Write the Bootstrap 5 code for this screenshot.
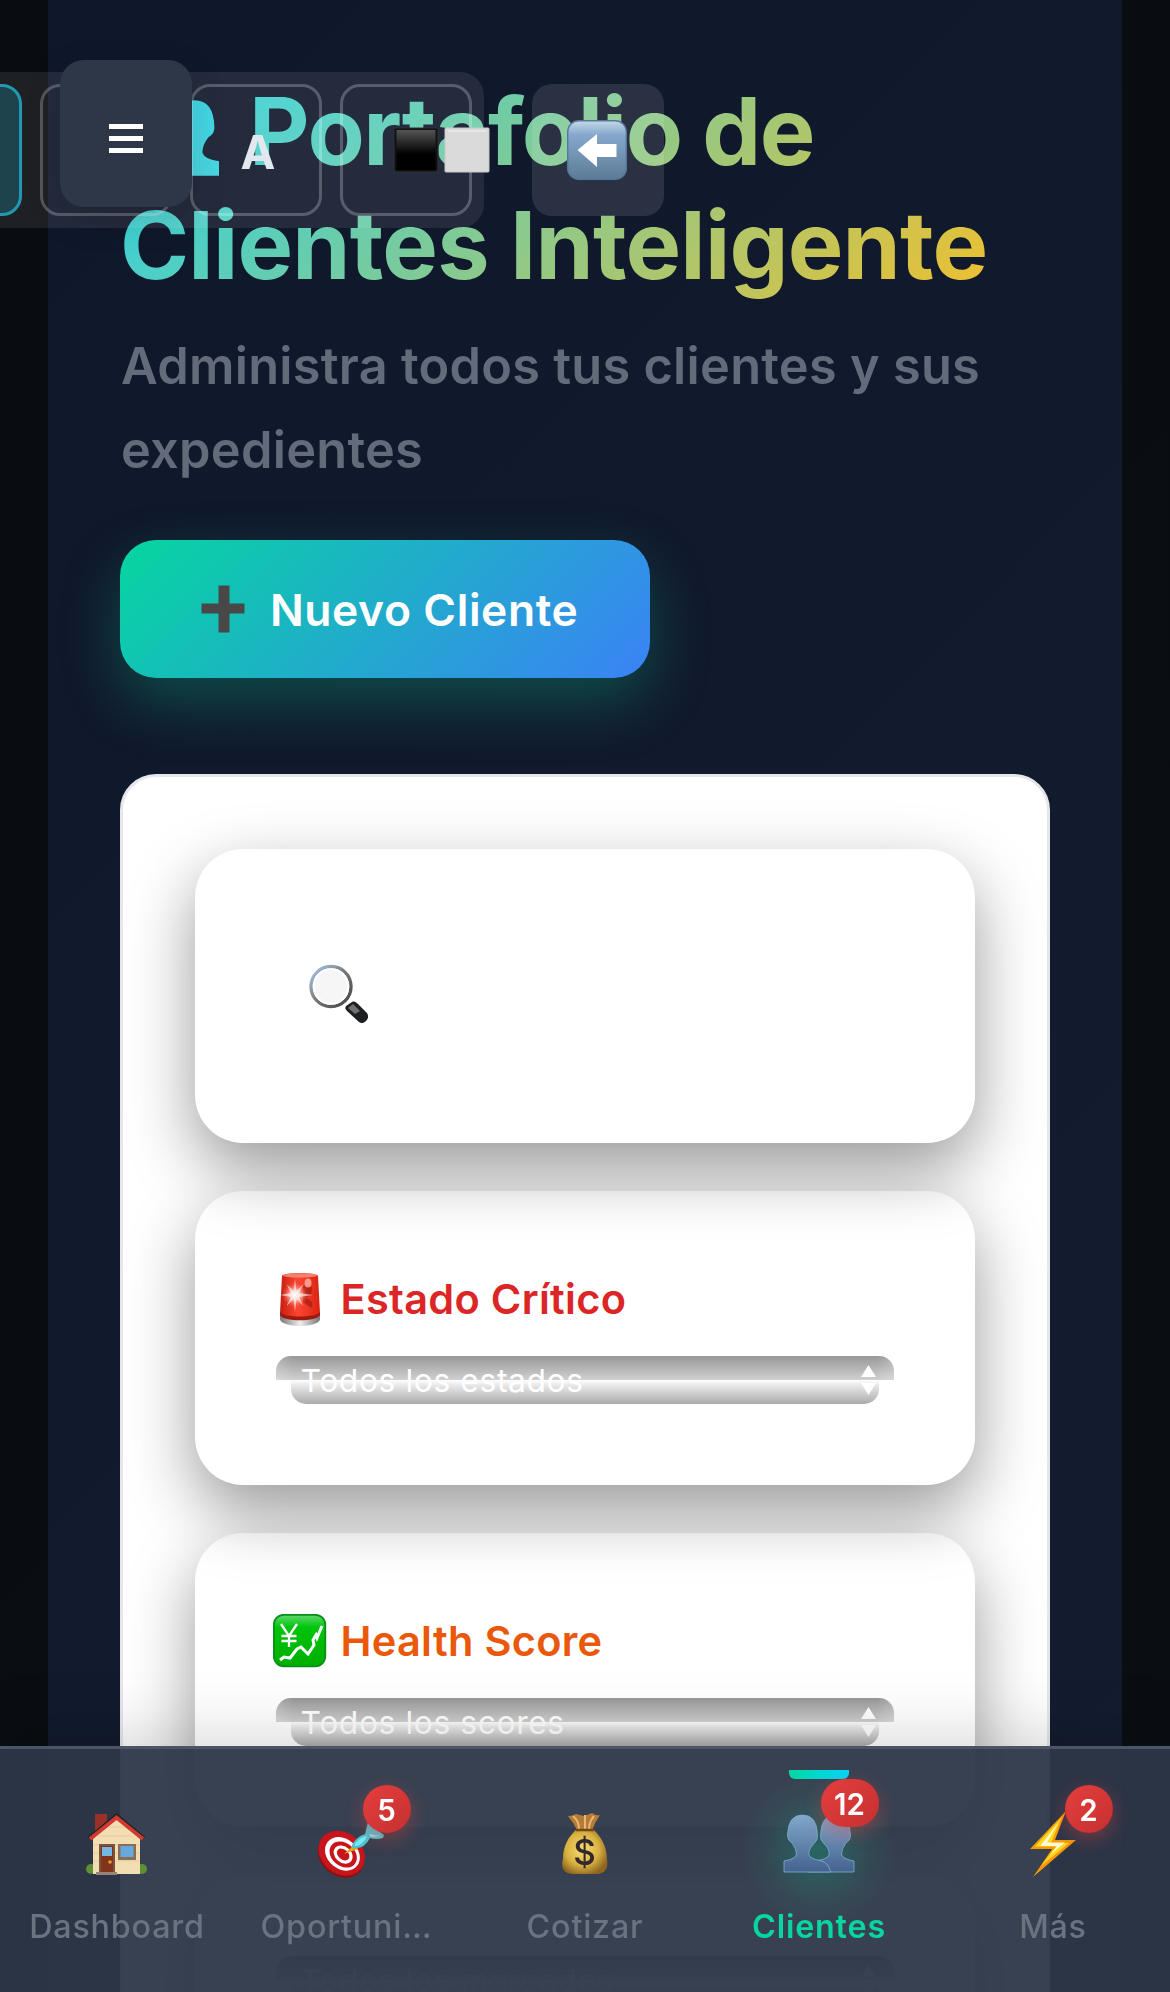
<!DOCTYPE html>
<html lang="es">
<head>
<meta charset="utf-8">
<meta name="viewport" content="width=device-width, initial-scale=1">
<title>Portafolio de Clientes</title>
<link href="https://cdn.jsdelivr.net/npm/bootstrap@5.3.0/dist/css/bootstrap.min.css" rel="stylesheet">
<style>
body{font-family:Inter,"Liberation Sans",sans-serif;background:linear-gradient(135deg,#090c10,#0a0e12);}
.page-shell{height:1992px;margin:0 48px;padding:74px 72px 0;background:linear-gradient(135deg,#0f172a,#141c30);}
.hero-title{font-size:93.5px;line-height:114px;font-weight:700;letter-spacing:-.8px;margin-bottom:22px;background:linear-gradient(135deg,#22d3ee,#fbbf24);-webkit-background-clip:text;background-clip:text;color:transparent;white-space:nowrap}
.hero-title svg{width:93px;height:76px;margin:0 30px 0 6px;vertical-align:-11px}
.hero-line{letter-spacing:-1.4px}
.hero-sub{font-size:50.5px;line-height:84px;font-weight:600;letter-spacing:.25px;color:#636a79;margin:0 -1px 48px 1px}
.btn-new{width:530px;height:138px;border-radius:36px;background:linear-gradient(135deg,#06d6a0,#3b82f6);box-shadow:0 24px 60px rgba(6,214,160,.27);color:#fff;font-size:44.4px;font-weight:600;letter-spacing:.6px;padding:9px 0 6px 78px;margin-bottom:96px}
.btn-new svg{width:51px;height:51px;margin-right:21px}
.panel{border:3px solid #e5e7eb;border-radius:36px;padding:72px;background:#fff;gap:48px;height:1500px}
.filter-box{border-radius:48px;padding:81px;background:rgba(255,255,255,.05);box-shadow:0 26px 66px rgba(0,0,0,.4);flex:none}
.search-box{height:294px;padding-left:112px}
.filter-label{font-size:41.5px;line-height:54px;font-weight:600;letter-spacing:.3px;margin:0 0 30px -3px;gap:13.5px}
.filter-label svg{width:54px;height:54px}
.pick{height:48px;padding:0 18px 0 24.5px;color:#fff;font-size:31.8px;line-height:48px;letter-spacing:.6px;isolation:isolate}
.pick span{padding-top:2px}
.pick::before,.pick::after{content:"";position:absolute;z-index:-1;height:24px}
.pick::before{left:0;right:0;top:0;border-radius:15px 15px 0 0;background:linear-gradient(90deg,rgba(255,255,255,.2),transparent 18px calc(100% - 18px),rgba(255,255,255,.2)),linear-gradient(#989898,#d0d0d0)}
.pick::after{left:15px;right:15px;top:24px;border-radius:0 0 15px 15px;background:linear-gradient(#fff,#eaeaea 20%,#ababab)}
.pick svg{width:15px;height:30px}
.theme-bar{position:fixed;left:-122px;top:72px;padding:12px;gap:18px;border-radius:24px;background:rgba(255,255,255,.085);z-index:5}
.tool-key{width:132px;height:132px;border:3px solid rgba(255,255,255,.24);border-radius:20px;color:#e2e8f0;font-size:46.7px;font-weight:700}
.tool-key.on{background:rgba(34,211,238,.2);border-color:#2299b2}
.back-key{position:fixed;left:532px;top:84px;width:132px;height:132px;border-radius:20px;background:rgba(255,255,255,.11);z-index:5}
.back-key svg{width:60px;height:60px;margin-right:3px}
.menu-key{position:fixed;left:60px;top:60px;width:132px;height:147px;border-radius:24px;background:#2d3748;box-shadow:0 12px 36px rgba(0,0,0,.15);z-index:6}
.menu-key svg{margin-top:11px}
.tabs{height:246px;border-top:3px solid #4a5568;background:rgba(45,55,72,.95);box-shadow:0 -12px 60px rgba(0,0,0,.15);z-index:7}
.tab{flex:1 1 0;min-width:0;padding-top:63px;color:#6b7280;font-size:32.3px;line-height:40px;font-weight:500;letter-spacing:.8px;text-decoration:none}
.tab svg{height:64px;width:80px;margin-bottom:31px;overflow:visible}
.tab.active-tab{color:#06d6a0;font-weight:600}
.active-tab::before{content:"";position:absolute;top:21px;left:87px;width:60px;height:9px;border-radius:0 0 6px 6px;background:linear-gradient(90deg,#06d6a0,#00d9ff)}
.glow{position:absolute;left:37px;top:20px;width:160px;height:160px;background:radial-gradient(circle,rgba(6,214,160,.26),rgba(6,214,160,.07) 45%,transparent 68%)}
.tab-count{position:absolute;left:129px;top:36px;min-width:48px;height:48px;border-radius:24px;background:linear-gradient(135deg,#e53e3e,#c53030);box-shadow:0 6px 18px rgba(229,62,62,.4);color:#fff;font-size:29.5px;line-height:51px;font-weight:600;letter-spacing:0;text-align:center;padding-right:1px}
</style>
</head>
<body class="overflow-hidden">
<svg width="0" height="0" class="position-absolute">
<defs>
<path id="bust" d="M0 57V46Q12 44 12.500 39Q12.500 34 8 28Q3 25 3.500 20Q4 0 18.500 0Q33 0 33.500 20Q34.500 25 29.500 29Q24 35 25 40Q27 44 36 45.500Q45.500 48 46.500 57Z"/>
<linearGradient id="gTitle" gradientUnits="userSpaceOnUse" x1="0" y1="0" x2="70" y2="57"><stop stop-color="#2ed2e4"/><stop offset="1" stop-color="#46d2d6"/></linearGradient>
<linearGradient id="gBlue" x1="0" y1="0" x2="0" y2="1"><stop stop-color="#82a8ca"/><stop offset="1" stop-color="#44638f"/></linearGradient>
<linearGradient id="gBlack" x1="0" y1="0" x2="0" y2="1"><stop stop-color="#555"/><stop offset=".6" stop-color="#000"/></linearGradient>
<linearGradient id="gKey" x1="0" y1="0" x2="0" y2="1"><stop stop-color="#c5d8e8"/><stop offset=".25" stop-color="#84a7cb"/><stop offset="1" stop-color="#5c7b96"/></linearGradient>
<linearGradient id="gRed" x1="0" x2="1"><stop stop-color="#c81e12"/><stop offset=".45" stop-color="#fa4632"/><stop offset="1" stop-color="#d92412"/></linearGradient>
<linearGradient id="gBase" x1="0" x2="1"><stop stop-color="#777"/><stop offset=".5" stop-color="#eee"/><stop offset="1" stop-color="#777"/></linearGradient>
<linearGradient id="gGreen" x1="0" y1="0" x2="0" y2="1"><stop stop-color="#5ed86c"/><stop offset=".25" stop-color="#00c40c"/><stop offset="1" stop-color="#00ae00"/></linearGradient>
<linearGradient id="gRim" x1="0" y1="0" x2="1" y2="1"><stop stop-color="#a9c9ee"/><stop offset=".5" stop-color="#777"/><stop offset="1" stop-color="#3e4144"/></linearGradient>
<radialGradient id="gBag" cx=".45" cy=".45" r=".6"><stop stop-color="#f6dd76"/><stop offset=".6" stop-color="#d9b240"/><stop offset="1" stop-color="#8d6420"/></radialGradient>
<radialGradient id="gStar"><stop stop-color="#fff"/><stop offset=".4" stop-color="#ffd0c8" stop-opacity=".8"/><stop offset="1" stop-color="#ff5540" stop-opacity="0"/></radialGradient>
</defs>
</svg>

<main class="page-shell overflow-hidden">
  <h1 class="hero-title"><svg viewBox="0 0 70 57" fill="url(#gTitle)"><use href="#bust"/><use href="#bust" transform="translate(70) scale(-1 1)"/></svg><span class="hero-line">Portafolio de</span><br>Clientes Inteligente</h1>
  <p class="hero-sub">Administra todos tus clientes y sus expedientes</p>
  <button class="btn btn-new border-0 d-flex align-items-center"><svg viewBox="0 0 51 51"><path d="M20 3.500h11v18h15v10H31v19H20v-19H3v-10h17z" fill="#484848" transform="translate(.5 -3)"/></svg>Nuevo Cliente</button>

  <section class="panel d-flex flex-column">
    <div class="filter-box search-box d-flex align-items-center">
      <svg width="64" height="64" viewBox="0 0 64 64"><path d="M39 42l6-4c2-1 4 0 6 2l9 9c2 3 1 6-1 8s-5 3-7 1L40 47c-2-2-2-3-1-5z" fill="#1d1f21"/><path d="M41 44l5-4 7 7-5 3z" fill="#8a8c8e" opacity=".75"/><circle cx="24" cy="22.500" r="20" fill="#f6f6f6" stroke="url(#gRim)" stroke-width="3.400"/><circle cx="24" cy="22.500" r="17.300" fill="none" stroke="#fff" stroke-width="2"/></svg>
    </div>

    <div class="filter-box">
      <div class="filter-label d-flex align-items-center" style="color:#dc2626">
        <svg viewBox="0 0 54 54"><path d="M7 42h40v5c0 4-9 7-20 7S7 51 7 47z" fill="url(#gBase)"/><path d="M9 4c0-4 36-4 36 0l2 37c0 8-40 8-40 0z" fill="url(#gRed)"/><path d="M7 40c3 6 37 6 40 0v3c-2 7-38 7-40 0z" fill="#9d1a10"/><ellipse cx="27" cy="3.500" rx="17" ry="2.200" fill="#f4806f"/><path d="M30 14q12-4 8 8l-5 4q8 2 6 10l-9-6z" fill="#a51a12" opacity=".7"/><ellipse cx="35" cy="11" rx="3.500" ry="4.500" fill="#ffb3a6" opacity=".8"/><circle cx="22" cy="23" r="13" fill="url(#gStar)"/><path d="M22 7l1.500 12 7-7-4.500 9 14 2-14 2 4.500 9-7-7-1.500 13-1.500-13-7 7 4.500-9-11-2 11-2-4.500-9 7 7z" fill="#fff" opacity=".6"/></svg>
        <span>Estado Crítico</span>
      </div>
      <div class="pick position-relative d-flex align-items-center justify-content-between"><span>Todos los estados</span><svg viewBox="0 0 15 30" fill="#fff"><path d="M7.500 0L15 12H0zM7.500 30L15 18H0z"/></svg></div>
    </div>

    <div class="filter-box">
      <div class="filter-label d-flex align-items-center" style="color:#ea580c">
        <svg viewBox="0 0 54 54"><rect x=".8" y=".8" width="51.500" height="51.500" rx="10" fill="url(#gGreen)" stroke="#079018" stroke-width="1.800"/><path d="M8 10l8 12 8-12M16 22v11M8.500 22h15M8.500 27h15" fill="none" stroke="#fff" stroke-width="2.300"/><path d="M7 46l4-3 6 1 7-9 4-2 7 7 6-9-1-5 3-5 1 3 5-12" fill="none" stroke="#fff" stroke-width="3"/></svg>
        <span>Health Score</span>
      </div>
      <div class="pick position-relative d-flex align-items-center justify-content-between"><span>Todos los scores</span><svg viewBox="0 0 15 30" fill="#fff"><path d="M7.500 0L15 12H0zM7.500 30L15 18H0z"/></svg></div>
    </div>

    <div class="filter-box">
      <div class="pick position-relative d-flex align-items-center justify-content-between"><span>Todos los mercados</span><svg viewBox="0 0 15 30" fill="#fff"><path d="M7.500 0L15 12H0zM7.500 30L15 18H0z"/></svg></div>
    </div>
  </section>
</main>

<div class="theme-bar d-flex">
  <div class="tool-key on"></div>
  <div class="tool-key"></div>
  <div class="tool-key d-flex align-items-center justify-content-center"><span class="ps-1 pt-1">A</span></div>
  <div class="tool-key d-flex align-items-center"><svg class="flex-shrink-0 overflow-visible" width="100" height="46" viewBox="0 0 100 46" transform="translate(50 0)"><rect x="1" y="1" width="44" height="44" rx="2" fill="#111" stroke="#333" stroke-width="1"/><rect x="3.500" y="3" width="39" height="40" fill="url(#gBlack)"/><rect x="52" y="1" width="44" height="44" rx="1" fill="#dadada" stroke="#c8c8c8"/><path d="M55 4h38" stroke="#e6e6e6" stroke-width="2"/></svg></div>
</div>
<div class="back-key d-flex align-items-center justify-content-center"><svg viewBox="0 0 60 60"><rect x=".7" y=".7" width="58.600" height="58.600" rx="11" fill="url(#gKey)" stroke="#55789b" stroke-width="1.400"/><path d="M10.500 30L30 14v10h19.500v13H30v10z" fill="#fff"/></svg></div>
<div class="menu-key d-flex align-items-center justify-content-center"><svg width="34" height="30" viewBox="0 0 34 30" fill="#fff"><path d="M0 0h34v5H0zM0 12h34v5H0zM0 24h34v5H0z"/></svg></div>

<nav class="tabs fixed-bottom d-flex">
  <a class="tab position-relative d-flex flex-column align-items-center">
    <svg viewBox="0 0 80 64"><circle cx="14" cy="57" r="5" fill="#5d9130"/><circle cx="65" cy="57" r="5" fill="#5d9130"/><path d="M18 2h12v12l-12 9z" fill="#9b3027"/><path d="M16 26L39 5l24 21v36H16z" fill="#f3ddb2"/><path d="M16 33h47M16 41h47M16 49h47M22 24h34M31 15h18" stroke="#e4cc9f" stroke-width="1"/><path d="M12 26L39.500 3 67 26" fill="none" stroke="#222" stroke-width="3"/><path d="M13 27L39.500 5.500 66 27" fill="none" stroke="#cf3a31" stroke-width="4"/><path d="M22 32h16v30H22z" fill="#77553e"/><path d="M24 34h12v26H24z" fill="#813419"/><path d="M25 35h10v9H25z" fill="#75b8e3"/><circle cx="33" cy="50" r="1.800" fill="#e8a030"/><path d="M41 32h18v16H41z" fill="#8b6c54"/><path d="M43.500 34h13v11h-13z" fill="#66a9dc"/><path d="M19 60h21v3H19z" fill="#958579"/></svg>
    <span>Dashboard</span>
  </a>
  <a class="tab position-relative d-flex flex-column align-items-center">
    <svg viewBox="0 0 80 64"><g transform="rotate(40 30 42)"><ellipse cx="31" cy="43" rx="25" ry="20.500" fill="#8f0e12"/><ellipse cx="30" cy="41" rx="25" ry="20.500" fill="#c8141b"/><ellipse cx="31" cy="41" rx="19" ry="15" fill="#fff"/><ellipse cx="32" cy="41" rx="15" ry="11.500" fill="#c8141b"/><ellipse cx="32" cy="41" rx="10.500" ry="8" fill="#fff"/><ellipse cx="32" cy="41" rx="7" ry="5" fill="#c8141b"/></g><path d="M33 42l10-9 4 4z" fill="#e3a51a"/><path d="M41 33q4-8 13-11l3-12 9 8 7 5-1 3q-7 2-13 0-5 10-14 10-5 1-4-3z" fill="#4fc3d0"/><path d="M44 32q5-7 12-8l-2 4q-5 6-10 6z" fill="#6ff0ff"/><path d="M58 22l12 2-10 1z" fill="#9fdbe0"/></svg>
    <span style="margin-left:-9px">Oportuni…</span><span class="tab-count">5</span>
  </a>
  <a class="tab position-relative d-flex flex-column align-items-center">
    <svg viewBox="0 0 80 64"><path d="M23 4q5 0 8-2l8 2 8-3q4 3 8 2-5 7-8 15H32Q28 10 23 4z" fill="#b77b38"/><path d="M28 4q6 5 6 13M40 3v14M49 4q-5 6-5 13" stroke="#e7b873" stroke-width="2" fill="none"/><path d="M32 17h16c8 8 14 17 14 30 2 10-3 15-10 15H28c-8 0-13-5-10-15 0-13 5-22 14-30z" fill="url(#gBag)"/><path d="M31 18h18" stroke="#744818" stroke-width="2.500"/><text x="40" y="53" text-anchor="middle" font-size="35" font-weight="500" fill="#33292b" font-family="Inter">$</text></svg>
    <span>Cotizar</span>
  </a>
  <a class="tab active-tab position-relative d-flex flex-column align-items-center">
    <span class="glow"></span>
    <svg viewBox="0 0 80 64" class="position-relative"><g transform="translate(5 3)" fill="url(#gBlue)" stroke="#79b1d2" stroke-width=".8"><use href="#bust" transform="translate(70) scale(-1 1)"/><use href="#bust"/></g></svg>
    <span class="position-relative">Clientes</span><span class="tab-count" style="left:119px;top:30px;width:58px">12</span>
  </a>
  <a class="tab position-relative d-flex flex-column align-items-center">
    <svg viewBox="0 0 80 64"><path d="M53-1L17 37h22L20 65l43-37H42z" fill="#f79a05"/><path d="M49 5L22 34.500h21L28 54l28-23H38z" fill="#ffd91f"/><path d="M46 10L27 34h17l-7 9 15-12.500H34z" fill="#fffbd0"/></svg>
    <span>Más</span><span class="tab-count">2</span>
  </a>
</nav>
<script src="https://cdn.jsdelivr.net/npm/bootstrap@5.3.0/dist/js/bootstrap.bundle.min.js"></script>
</body>
</html>
